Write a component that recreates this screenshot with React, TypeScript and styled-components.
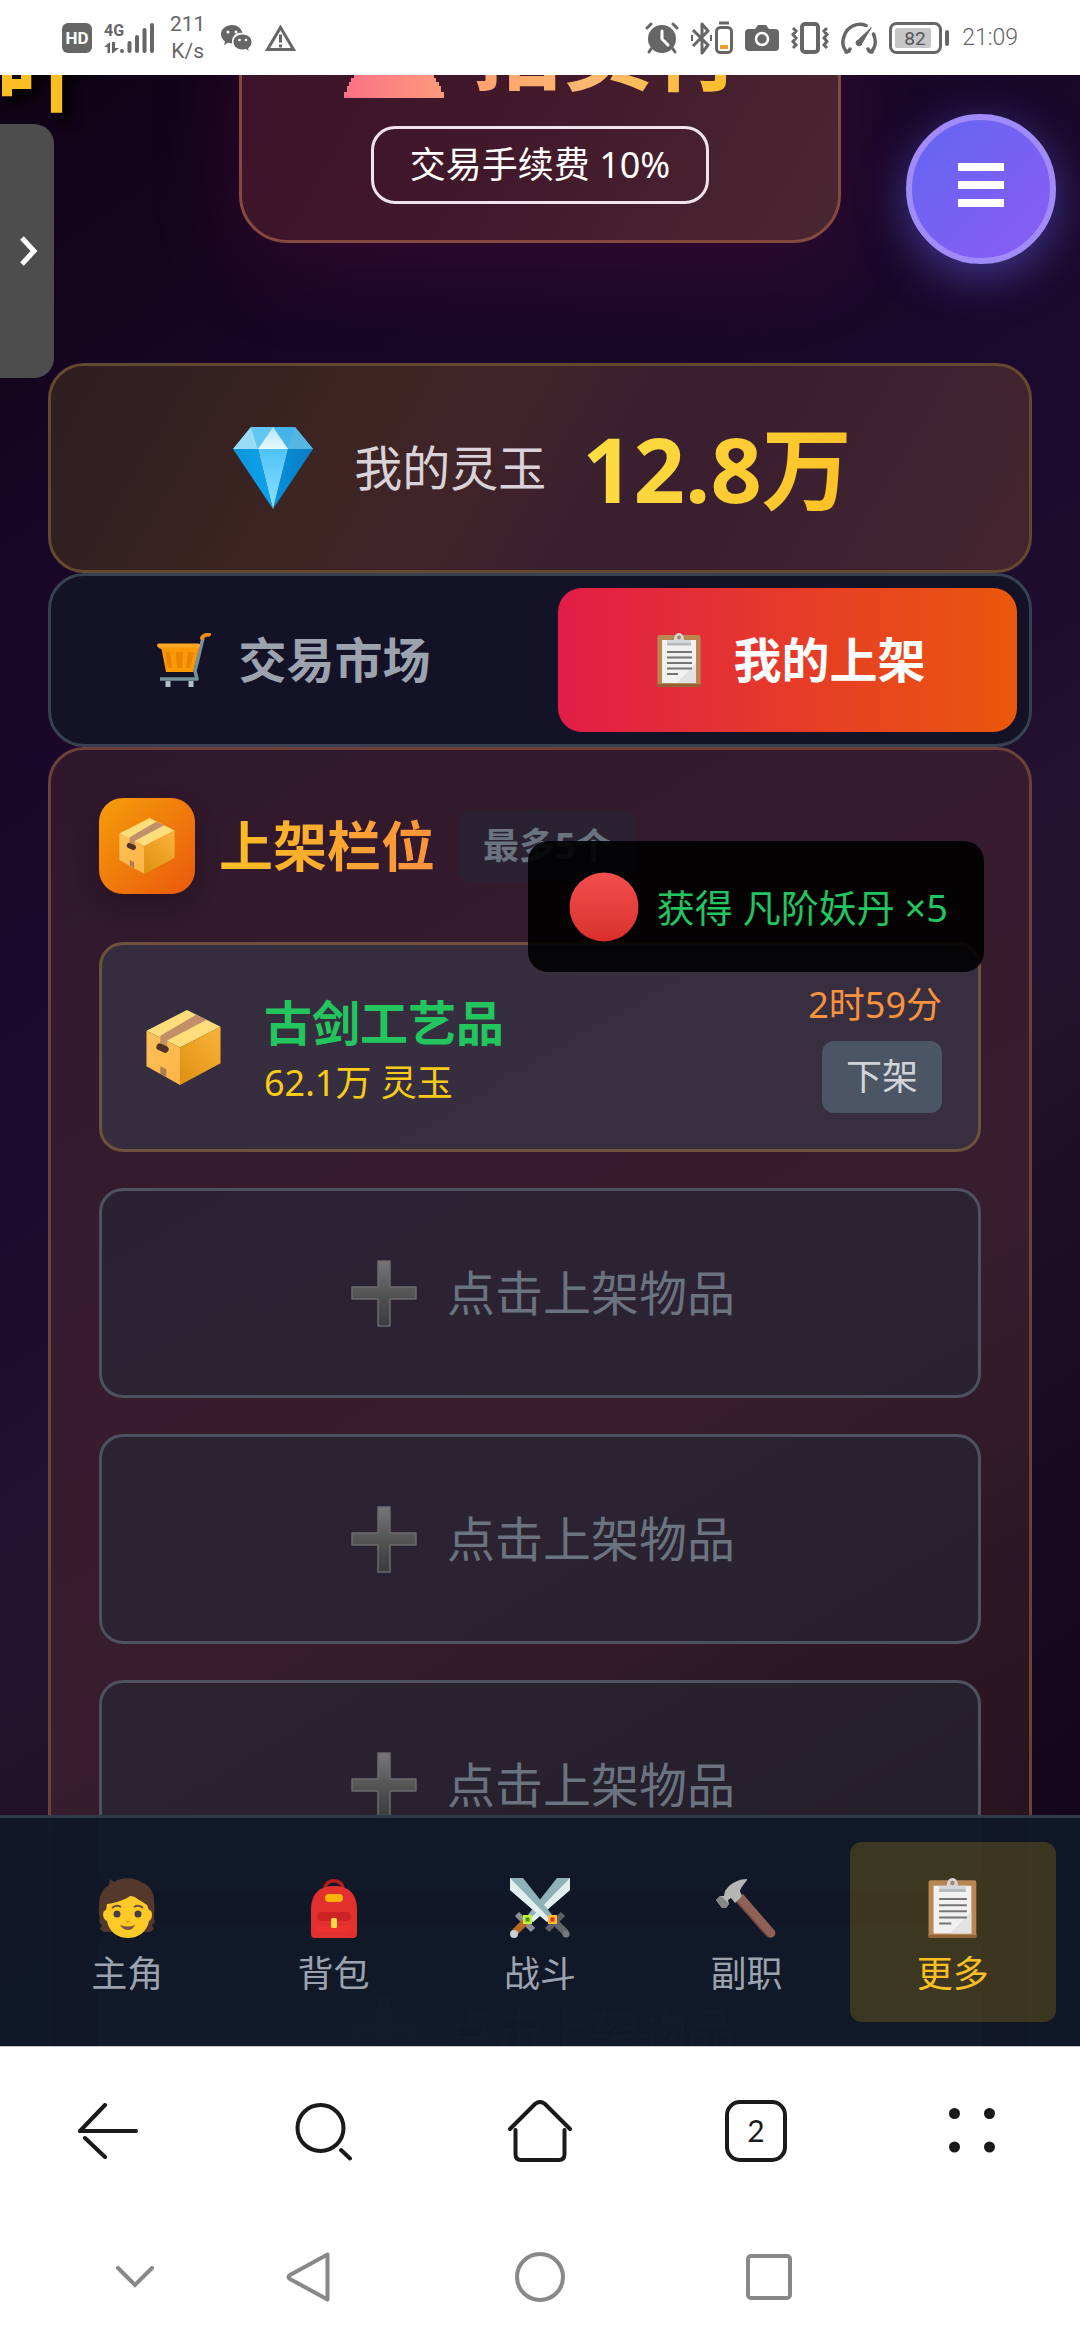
import React from "react";
import styled, { createGlobalStyle, css } from "styled-components";

const sans = `"Noto Sans", "Noto Sans CJK SC", sans-serif`;

const GlobalStyle = createGlobalStyle`
  *, *::before, *::after { box-sizing: border-box; }
  html, body { margin: 0; padding: 0; background: #fff; }
  body { font-family: ${sans}; overflow: hidden; }
  button { margin: 0; padding: 0; border: 0; background: none; color: inherit; font: inherit; cursor: pointer; }
  h1, h2, h3, p, ul { margin: 0; padding: 0; }
  ul { list-style: none; }
  svg { display: block; flex: none; }
`;

const Screen = styled.div`
  display: flex;
  flex-direction: column;
  height: 100vh;
  background: #fff;
`;

/* ---------- status bar ---------- */

const StatusBar = styled.header`
  display: flex;
  justify-content: space-between;
  align-items: center;
  flex: none;
  height: 75px;
  padding: 0 62px;
  background: #fff;
  color: #666;
  font-family: Roboto, sans-serif;
`;

const StatusGroup = styled.div`
  display: flex;
  align-items: center;
  gap: 12px;
`;

const NetSpeed = styled.div`
  padding: 0 4px;
  font-size: 21px;
  line-height: 27px;
  text-align: center;
`;

const Clock = styled.time`
  font-size: 23px;
  font-weight: 300;
  line-height: 30px;
`;

/* ---------- game page ---------- */

const Game = styled.main`
  position: relative;
  flex: 1;
  min-height: 0;
  overflow: hidden;
  background: linear-gradient(145deg, #100315 0%, #180727 20%, #1c0a2f 40%, #24132e 58%, #180a22 78%, #12031a 100%);
`;

const Sheet = styled.div`
  display: flex;
  flex-direction: column;
  padding: 0 48px;
`;

const CornerTitle = styled.span`
  position: absolute;
  left: -4px;
  top: -60px;
  color: #fbbf24;
  font-size: 90px;
  font-weight: 700;
  line-height: 108px;
  text-shadow: 8px 8px 12px #000;
`;

const Hero = styled.section`
  display: flex;
  flex-direction: column;
  align-items: center;
  gap: 24px;
  align-self: center;
  margin: -120px 0 120px;
  padding: 36px 96px;
  border: 3px solid #84493f;
  border-radius: 48px;
  background: linear-gradient(120deg, #3a1328 0%, #42192b 50%, #4a2832 100%);
  box-shadow: 0 24px 90px rgba(160, 20, 90, 0.2);
`;

const HeroTitle = styled.h1`
  display: flex;
  align-items: center;
  gap: 22px;
  font-size: 90px;
  font-weight: 700;
  line-height: 108px;
`;

const HeroText = styled.span`
  background: linear-gradient(90deg, #fda06f, #fdba70 45%, #fbbf24);
  background-clip: text;
  -webkit-background-clip: text;
  color: transparent;
`;

const FeePill = styled.p`
  height: 78px;
  padding: 0 36px;
  border: 3px solid #efe3ec;
  border-radius: 24px;
  color: #fff;
  font-size: 36px;
  line-height: 72px;
`;

const frame = css`
  border: 3px solid;
  border-radius: 36px;
`;

const Balance = styled.section`
  ${frame}
  display: flex;
  align-items: center;
  justify-content: center;
  gap: 36px;
  height: 210px;
  border-color: #64482f;
  background: linear-gradient(120deg, #2e1d20 0%, #3d2522 30%, #40242a 44%, #391e30 60%, #44252f 100%);
`;

const BalanceIcon = styled.span`
  display: flex;
  justify-content: center;
  width: 90px;
`;

const BalanceLabel = styled.span`
  color: #d9d2d8;
  font-size: 48px;
  line-height: 72px;
`;

const BalanceValue = styled.strong`
  background: linear-gradient(110deg, #fde047, #fbbf24);
  background-clip: text;
  -webkit-background-clip: text;
  color: transparent;
  font-size: 90px;
  font-weight: 700;
  line-height: 108px;
`;

const Tabs = styled.div`
  ${frame}
  display: grid;
  grid-template-columns: 1fr 1fr;
  gap: 36px;
  padding: 12px;
  border-color: #374151;
  background: #131227;
`;

const Tab = styled.button<{ $active?: boolean }>`
  display: flex;
  align-items: center;
  justify-content: center;
  gap: 24px;
  height: 144px;
  border-radius: 24px;
  color: ${(p) => (p.$active ? "#fff" : "#9ca3af")};
  background: ${(p) => (p.$active ? "linear-gradient(90deg, #e11d48, #ea580c)" : "none")};
  font-size: 48px;
  font-weight: 700;
  line-height: 72px;
`;

const TabIcon = styled.span`
  display: flex;
  justify-content: center;
  width: 60px;
`;

const Panel = styled.section`
  ${frame}
  padding: 48px;
  border-color: #6b4138;
  background: linear-gradient(150deg, #2f172b 0%, #361c2e 30%, #371d2d 52%, #2a1521 75%, #22101a 100%);
`;

const PanelHead = styled.div`
  display: flex;
  align-items: center;
  gap: 24px;
  margin-bottom: 48px;
`;

const PanelBadge = styled.span`
  display: grid;
  place-items: center;
  width: 96px;
  height: 96px;
  border-radius: 24px;
  background: linear-gradient(135deg, #f59e0b, #ea580c);
  box-shadow: 0 12px 24px rgba(0, 0, 0, 0.2);
`;

const PanelTitle = styled.h2`
  background: linear-gradient(90deg, #fbbf24, #fb923c);
  background-clip: text;
  -webkit-background-clip: text;
  color: transparent;
  font-size: 54px;
  font-weight: 700;
  line-height: 84px;
`;

const LimitTag = styled.span`
  padding: 0 24px;
  border-radius: 12px;
  background: rgba(31, 41, 55, 0.5);
  color: #6b7280;
  font-size: 36px;
  font-weight: 700;
  line-height: 72px;
`;

const Slots = styled.ul`
  display: flex;
  flex-direction: column;
  gap: 36px;
`;

const slot = css`
  display: flex;
  align-items: center;
  width: 100%;
  height: 210px;
  border: 3px solid;
  border-radius: 24px;
`;

const Listing = styled.div`
  ${slot}
  gap: 36px;
  padding: 0 36px;
  border-color: #6d533c;
  background: rgba(55, 65, 81, 0.5);
`;

const ListingIcon = styled.span`
  display: flex;
  justify-content: center;
  width: 90px;
`;

const ListingInfo = styled.div`
  flex: 1;
`;

const ListingName = styled.h3`
  color: #22c55e;
  font-size: 48px;
  font-weight: 700;
  line-height: 72px;
`;

const ListingPrice = styled.p`
  color: #facc15;
  font-size: 36px;
  line-height: 48px;
`;

const ListingSide = styled.div`
  display: flex;
  flex-direction: column;
  align-items: flex-end;
  gap: 12px;
`;

const TimeLeft = styled.span`
  color: #fb923c;
  font-size: 36px;
  line-height: 48px;
`;

const Withdraw = styled.button`
  padding: 0 24px;
  border-radius: 12px;
  background: #4b5563;
  color: #d1d5db;
  font-size: 36px;
  line-height: 72px;
`;

const EmptySlot = styled.button`
  ${slot}
  justify-content: center;
  gap: 24px;
  border-color: #4d5160;
  background: rgba(31, 41, 55, 0.5);
  color: #6b7280;
  font-size: 48px;
  line-height: 72px;
`;

const SlotIcon = styled.span`
  display: flex;
  justify-content: center;
  width: 78px;
`;

const SideHandle = styled.button`
  position: absolute;
  left: 0;
  top: 49px;
  display: flex;
  align-items: center;
  justify-content: flex-end;
  width: 54px;
  height: 254px;
  padding-right: 16px;
  border-radius: 0 20px 20px 0;
  background: #4d4d4d;
`;

const MenuButton = styled.button`
  position: absolute;
  top: 39px;
  right: 24px;
  display: grid;
  place-items: center;
  width: 150px;
  height: 150px;
  padding-bottom: 8px;
  border: 6px solid #a08bf8;
  border-radius: 50%;
  background: linear-gradient(135deg, #6366f1, #8b5cf6);
  box-shadow: 0 12px 45px rgba(99, 102, 241, 0.5);
`;

const Toast = styled.div`
  position: absolute;
  top: 766px;
  right: 96px;
  display: flex;
  align-items: center;
  gap: 18px;
  height: 131px;
  padding: 0 36px 0 41px;
  border-radius: 20px;
  background: rgba(0, 0, 0, 0.9);
  color: #22c55e;
  font-size: 38px;
  line-height: 54px;
`;

const GameNav = styled.nav`
  position: absolute;
  left: 0;
  right: 0;
  bottom: 0;
  display: grid;
  grid-template-columns: repeat(5, 1fr);
  padding: 24px;
  border-top: 3px solid #303947;
  background: rgba(17, 24, 39, 0.97);
`;

const NavItem = styled.button<{ $active?: boolean }>`
  display: flex;
  flex-direction: column;
  align-items: center;
  padding: 24px 0;
  border-radius: 12px;
  background: ${(p) => (p.$active ? "rgba(234, 179, 8, 0.2)" : "none")};
  color: ${(p) => (p.$active ? "#fbbf24" : "#9ca3af")};
  font-size: 36px;
  line-height: 48px;
`;

const NavIcon = styled.span`
  display: flex;
  align-items: center;
  height: 84px;
`;

/* ---------- browser and system bars ---------- */

const BrowserBar = styled.nav`
  display: grid;
  grid-template-columns: repeat(5, 1fr);
  flex: none;
  height: 168px;
  border-top: 1px solid #c4c6cc;
`;

const SystemBar = styled.nav`
  display: grid;
  grid-template-columns: 174fr 172fr 292fr 166fr 180fr;
  flex: none;
  height: 126px;
  padding: 0 48px;
`;

const BarButton = styled.button`
  display: grid;
  place-items: center;
`;

const TabCount = styled.span`
  width: 62px;
  height: 62px;
  border: 4px solid #1a1a1a;
  border-radius: 15px;
  color: #1a1a1a;
  font-family: Lato, sans-serif;
  font-size: 30px;
  font-weight: 400;
  line-height: 52px;
  text-align: center;
`;

/* ---------- drawings ---------- */

const Signal = () => (
  <svg width="50" height="32" viewBox="0 0 50 32" fill="#666">
    <text x="0" y="14" fontSize="16" fontWeight="700" fontFamily="Roboto, sans-serif">4G</text>
    <path d="M0 25l6-5v11H3.500v-6zM8 20h3v6h4l-6 5H8z" />
    <rect x="16" y="27" width="4" height="4" rx="2" />
    <rect x="23.500" y="19" width="4" height="12" rx="2" />
    <rect x="31" y="13" width="4" height="18" rx="2" />
    <rect x="38.500" y="6" width="4" height="25" rx="2" />
    <rect x="46" y="1" width="4" height="30" rx="2" />
  </svg>
);

const HdBadge = () => (
  <svg width="30" height="30" viewBox="0 0 30 30">
    <rect width="30" height="30" rx="6" fill="#666" />
    <text x="15" y="21" fontSize="17" fontWeight="700" fontFamily="Roboto, sans-serif" fill="#fff" textAnchor="middle">HD</text>
  </svg>
);

const Wechat = () => (
  <svg width="32" height="28" viewBox="0 0 32 28" fill="#666">
    <path d="M11 1C4.900 1 0 5 0 10.200c0 3 1.600 5.500 4 7.200L3 21l4.200-2.200c1.500.4 2.900.5 4 .5A8.500 8.500 0 0 1 21.400 9C20.500 4.400 16.200 1 11 1z" />
    <path d="M21.500 10C16.300 10 12 13.500 12 18s4.300 8 9.500 8c1.200 0 2.300-.2 3.300-.5L28.500 27.500l-.9-3.200c2-1.500 3.400-3.700 3.400-6.300 0-4.500-4.300-8-9.500-8z" stroke="#fff" strokeWidth="1" />
    <g fill="#fff">
      <circle cx="7" cy="8" r="1.500" /><circle cx="15" cy="8" r="1.500" />
      <circle cx="18.500" cy="16" r="1.300" /><circle cx="25" cy="16" r="1.300" />
    </g>
  </svg>
);

const Warning = () => (
  <svg width="31" height="28" viewBox="0 0 31 28" fill="none" stroke="#666" strokeWidth="3">
    <path d="M15.500 3.500L28.500 25.500H2.500z" />
    <path d="M15.500 10.500v8M15.500 20.500v3" />
  </svg>
);

const Alarm = () => (
  <svg width="34" height="32" viewBox="0 0 34 32" fill="none" stroke="#666" strokeWidth="3" strokeLinecap="round">
    <circle cx="17" cy="17" r="14" fill="#666" stroke="none" />
    <path d="M2 6l4-4M32 6l-4-4M6 27l-2 3M28 27l2 3" />
    <path d="M17 9v8l6 6" stroke="#fff" />
  </svg>
);

const Bluetooth = () => (
  <svg width="42" height="34" viewBox="0 0 42 34" fill="none" stroke="#666" strokeWidth="3">
    <path d="M2 9l15 15-6 8V3l6 7L2 25" strokeLinejoin="round" />
    <path d="M1 14v6M20 14v6" strokeWidth="2" />
    <rect x="25.500" y="6.500" width="15" height="25" rx="4" />
    <path d="M28 2h10" />
    <path d="M29 26h8" stroke="#f39a2d" strokeWidth="4" />
  </svg>
);

const Camera = () => (
  <svg width="34" height="26" viewBox="0 0 34 26">
    <path d="M4 4h6l3-4h8l3 4h6a4 4 0 0 1 4 4v14a4 4 0 0 1-4 4H4a4 4 0 0 1-4-4V8a4 4 0 0 1 4-4z" fill="#666" />
    <circle cx="17" cy="14" r="6" fill="none" stroke="#fff" strokeWidth="2.500" />
  </svg>
);

const Vibrate = () => (
  <svg width="38" height="32" viewBox="0 0 38 32" fill="none" stroke="#666" strokeWidth="3">
    <rect x="11" y="2" width="16" height="28" rx="3" strokeWidth="4" />
    <path d="M2 6l3 3-3 3.500 3 3.500-3 3.500 3 3.500-3 3M36 6l-3 3 3 3.500-3 3.500 3 3.500-3 3.500 3 3" />
  </svg>
);

const Gauge = () => (
  <svg width="36" height="32" viewBox="0 0 36 32" fill="none" stroke="#666" strokeWidth="3.500" strokeLinecap="round">
    <path d="M6 30C2 26 1 20 3 14.500 6 4 17 0 25 3.500M32.500 12c3 7 2 14-3 18M5 30l3-1 1-2M31 30l-3-1-1-2" />
    <path d="M30 6L21 21a3 3 0 1 1-4-3z" fill="#666" strokeWidth="1" />
  </svg>
);

const Battery = () => (
  <svg width="61" height="32" viewBox="0 0 61 32">
    <rect x="1.500" y="1.500" width="50" height="29" rx="6" fill="none" stroke="#666" strokeWidth="3" />
    <rect x="6" y="6" width="36" height="20" rx="2" fill="#c6c6c6" />
    <rect x="56" y="8" width="4" height="16" rx="2" fill="#666" />
    <text x="26" y="23" fontSize="19" fontFamily="Roboto, sans-serif" fill="#555" textAnchor="middle">82</text>
  </svg>
);

const Hall = () => (
  <svg width="112" height="108" viewBox="0 0 112 108">
    <defs>
      <linearGradient id="hall" x1="0" x2="1">
        <stop offset="0" stopColor="#fb7185" /><stop offset="1" stopColor="#fc9a7c" />
      </linearGradient>
    </defs>
    <path
      fill="url(#hall)"
      d="M56 2L100 24V34H12V24zM20 36H36V70H20zM48 36H64V70H48zM76 36H92V70H76zM18 72H94V80H96V84H98V88H101V92H103V98H106V104H6V98H9V92H11V88H13V84H16V80H18z"
    />
  </svg>
);

const Gem = () => (
  <svg width="80" height="82" viewBox="0 0 80 82">
    <defs>
      <linearGradient id="gemMid" x1="0" x2="0" y1="0" y2="1"><stop offset="0" stopColor="#4fc3f7" /><stop offset="1" stopColor="#8be0ff" /></linearGradient>
      <linearGradient id="gemTop" x1="0" x2="0" y1="0" y2="1"><stop offset="0" stopColor="#b3e5fc" /><stop offset="1" stopColor="#e9f9ff" /></linearGradient>
      <linearGradient id="gemL" x1="0" x2="1"><stop offset="0" stopColor="#0c93da" /><stop offset="1" stopColor="#0aa5ee" /></linearGradient>
      <linearGradient id="gemR" x1="0" x2="1"><stop offset="0" stopColor="#0390e0" /><stop offset="1" stopColor="#0b7dc0" /></linearGradient>
    </defs>
    <path d="M18 0H62L80 22H0z" fill="#4db9ec" />
    <path d="M18 0L0 22H25z" fill="#9adbf8" /><path d="M18 0H40L25 22z" fill="#62c6f2" />
    <path d="M62 0H40L55 22z" fill="#45b4ea" /><path d="M62 0L80 22H55z" fill="#55b6e2" />
    <path d="M40 0L55 22H25z" fill="url(#gemTop)" />
    <path d="M0 22H25L40 82z" fill="url(#gemL)" />
    <path d="M80 22H55L40 82z" fill="url(#gemR)" />
    <path d="M25 22H55L40 82z" fill="url(#gemMid)" />
  </svg>
);

const Cart = () => (
  <svg width="54" height="54" viewBox="0 0 54 54" fill="none">
    <path d="M46 5L38 38L40 46H3" stroke="#78909c" strokeWidth="3.500" strokeLinejoin="round" />
    <path d="M45 5Q46 2 52 1.500" stroke="#ef8b0f" strokeWidth="4" strokeLinecap="round" />
    <path d="M2 11H43L36 39H9L4.500 16A3 3 0 0 1 2 11z" fill="#fb9905" />
    <path d="M2 12.500H41" stroke="#ffa726" strokeWidth="4" strokeLinecap="round" />
    <path d="M8 19h5l2 16h-4zM19 19h7l-1 16h-5zM31 19h6l-4 16h-4z" fill="#e98300" />
    <path d="M11 48v6M34 48v6" stroke="#b0bec5" strokeWidth="5" />
  </svg>
);

const Clipboard = ({ height }: { height: number }) => (
  <svg width={(height * 44) / 54} height={height} viewBox="0 0 44 54">
    <rect x="0.500" y="2" width="43" height="52" rx="2" fill="#b88752" />
    <path d="M0 51h44v1.500a2 2 0 0 1-2 1.500H2a2 2 0 0 1-2-1.500z" fill="#936338" />
    <path d="M5 7H39V50H5z" fill="#f1f1f1" />
    <path d="M39 30V50H20z" fill="#e2e2e2" />
    <path d="M10 7h7c0-4 2-7 5-7s5 3 5 7h7v5H10z" fill="#d5d8da" />
    <path d="M10 10h24v2.500H10z" fill="#b4b8bb" />
    <circle cx="22" cy="4.500" r="2" fill="#a8866a" />
    <path d="M10 19H35M10 24.500H35M10 30H35M10 35.500H35M10 41H21" stroke="#757575" strokeWidth="1.800" />
  </svg>
);

const Parcel = ({ size }: { size: number }) => (
  <svg width={size} height={size} viewBox="0 0 75 76">
    <defs>
      <linearGradient id="boxL" x1="0" x2="0.600" y1="0" y2="1"><stop offset="0" stopColor="#fcc258" /><stop offset="1" stopColor="#ffb54a" /></linearGradient>
      <linearGradient id="boxR" x1="1" x2="0.200" y1="0" y2="1"><stop offset="0" stopColor="#fcb33c" /><stop offset="1" stopColor="#de9412" /></linearGradient>
    </defs>
    <path d="M41 0L75 17L34 38L0 21z" fill="#ffdd7b" />
    <path d="M0 21L34 38V76L0 57z" fill="url(#boxL)" />
    <path d="M34 38L75 17V54L34 76z" fill="url(#boxR)" />
    <path d="M50 5L61 10L21 31V37L14 34V26z" fill="#c19069" />
    <rect x="10" y="35" width="13" height="7" rx="3.500" fill="#4e3324" transform="rotate(25 16 38)" />
    <path d="M14 57l6 3v8l-6-3.500z" fill="#a98150" />
  </svg>
);

const Plus = () => (
  <svg width="66" height="67" viewBox="0 0 66 67">
    <defs>
      <linearGradient id="plus" x1="0" x2="0" y1="0" y2="1"><stop offset="0" stopColor="#777578" /><stop offset="0.600" stopColor="#4e4e4e" /><stop offset="1" stopColor="#3c3c3c" /></linearGradient>
    </defs>
    <path d="M27 1H39V27H65V39H39V66H27V39H1V27H27z" fill="url(#plus)" stroke="#6b696d" strokeWidth="1.500" strokeLinejoin="round" />
  </svg>
);

const RedBall = () => (
  <svg width="70" height="70" viewBox="0 0 70 70">
    <defs>
      <linearGradient id="ball" x1="0" x2="0" y1="0" y2="1"><stop offset="0" stopColor="#f44f4d" /><stop offset="0.850" stopColor="#dc3633" /><stop offset="1" stopColor="#dd2a2a" /></linearGradient>
    </defs>
    <circle cx="35" cy="35" r="34.500" fill="url(#ball)" />
  </svg>
);

const Person = () => (
  <svg width="58" height="60" viewBox="0 0 58 60">
    <path d="M11 7l1-6 4 3C24-1 36-1 43 4c9 3 14 11 13 22 1 5 0 9 0 14l1 4-3 3 2 4-4 3H6l-4-3 2-4-3-3 1-4C0 35 1 31 1 27 1 18 4 11 11 7z" fill="#54382c" />
    <path d="M9 26c10-1 19-5 23-8 5 0 7 3 11 5l6 4 2 5c4 0 4 9 0 11-2 11-11 17-21 17S11 54 9 43c-5-2-5-11-1-11z" fill="#ffca28" />
    <path d="M14 30q4-4 9-1M36 29q5-3 9 1" fill="none" stroke="#6d4c41" strokeWidth="2" />
    <circle cx="19" cy="36" r="3.500" fill="#404040" /><circle cx="40" cy="36" r="3.500" fill="#404040" />
    <path d="M27 42q3 2 6 0l-3 3z" fill="#e59600" />
    <path d="M22 47q8 3 15 0-2 5-7 5t-8-5z" fill="#795548" />
  </svg>
);

const Backpack = () => (
  <svg width="48" height="60" viewBox="0 0 48 60">
    <path d="M15 11C15 0 33 0 33 11" fill="none" stroke="#b71c1c" strokeWidth="3.500" />
    <path d="M1 32C1 15 10 8 24 8s23 7 23 24V56a4 4 0 0 1-4 4H5a4 4 0 0 1-4-4z" fill="#e2302f" />
    <rect x="15" y="16" width="18" height="8" rx="4" fill="#fbb305" />
    <rect x="7" y="34" width="34" height="9" rx="4.500" fill="#ce2325" /><rect x="7" y="48" width="34" height="6" rx="3" fill="#f02f2f" />
    <rect x="21" y="40" width="6" height="10" rx="1.500" fill="#ffd740" />
  </svg>
);

const Swords = () => (
  <svg width="60" height="60" viewBox="0 0 60 60">
    <path d="M47 0H60V12L23 44L17 38z" fill="#8fb1b8" />
    <path d="M60 0V12L23 44L20 41z" fill="#e0eef0" />
    <path d="M13 0H0V12L37 44L43 38z" fill="#8fb1b8" />
    <path d="M0 0V12L37 44L40 41z" fill="#e0eef0" />
    <path d="M7 36l16 16" stroke="#8c8f97" strokeWidth="6" />
    <path d="M53 36L37 52" stroke="#5d6066" strokeWidth="6" />
    <path d="M15 44L4 55" stroke="#b96a22" strokeWidth="7" />
    <path d="M45 44L56 55" stroke="#62656a" strokeWidth="7" />
    <circle cx="4" cy="56" r="4" fill="#c9cdd2" /><circle cx="56" cy="56" r="3.500" fill="#777b80" />
    <rect x="13" y="37" width="9" height="9" fill="#c6ee3a" /><rect x="15.500" y="39.500" width="4" height="4" fill="#4c8c1f" />
    <rect x="38" y="37" width="9" height="9" fill="#ffb52e" /><rect x="40.500" y="39.500" width="4" height="4" fill="#d8320a" />
  </svg>
);

const Hammer = () => (
  <svg width="60" height="60" viewBox="0 0 60 60">
    <path d="M19 22L27 16L59 53C61 58 55 61 52 59z" fill="#8f6053" />
    <path d="M19 22L52 59" stroke="#6f463b" strokeWidth="1.500" />
    <path d="M31 1C24 1 15 4 9 13L8 18L4 18L0 22L6 30L10 30L13 26L12 22L15 20L19 25L26 18L24 13C25 9 29 5 31 2z" fill="#b5b5b5" />
    <path d="M0 22L6 30L10 30L13 26L5 18z" fill="#868686" />
  </svg>
);

const slots = [1, 2, 3, 4];

const navItems = [
  { label: "主角", icon: <Person /> },
  { label: "背包", icon: <Backpack /> },
  { label: "战斗", icon: <Swords /> },
  { label: "副职", icon: <Hammer /> },
  { label: "更多", icon: <Clipboard height={60} />, active: true },
];

export default function App() {
  return (
    <Screen>
      <GlobalStyle />
      <StatusBar>
        <StatusGroup>
          <HdBadge />
          <Signal />
          <NetSpeed>211<br />K/s</NetSpeed>
          <Wechat />
          <Warning />
        </StatusGroup>
        <StatusGroup>
          <Alarm />
          <Bluetooth />
          <Camera />
          <Vibrate />
          <Gauge />
          <Battery />
          <Clock>21:09</Clock>
        </StatusGroup>
      </StatusBar>

      <Game>
        <CornerTitle>叶</CornerTitle>
        <Sheet>
          <Hero>
            <HeroTitle>
              <Hall />
              <HeroText>拍卖行</HeroText>
            </HeroTitle>
            <FeePill>交易手续费 10%</FeePill>
          </Hero>

          <Balance>
            <BalanceIcon><Gem /></BalanceIcon>
            <BalanceLabel>我的灵玉</BalanceLabel>
            <BalanceValue>12.8万</BalanceValue>
          </Balance>

          <Tabs>
            <Tab type="button"><TabIcon><Cart /></TabIcon>交易市场</Tab>
            <Tab type="button" $active><TabIcon><Clipboard height={54} /></TabIcon>我的上架</Tab>
          </Tabs>

          <Panel>
            <PanelHead>
              <PanelBadge><Parcel size={56} /></PanelBadge>
              <PanelTitle>上架栏位</PanelTitle>
              <LimitTag>最多5个</LimitTag>
            </PanelHead>
            <Slots>
              <li>
                <Listing>
                  <ListingIcon><Parcel size={75} /></ListingIcon>
                  <ListingInfo>
                    <ListingName>古剑工艺品</ListingName>
                    <ListingPrice>62.1万 灵玉</ListingPrice>
                  </ListingInfo>
                  <ListingSide>
                    <TimeLeft>2时59分</TimeLeft>
                    <Withdraw type="button">下架</Withdraw>
                  </ListingSide>
                </Listing>
              </li>
              {slots.map((n) => (
                <li key={n}>
                  <EmptySlot type="button"><SlotIcon><Plus /></SlotIcon>点击上架物品</EmptySlot>
                </li>
              ))}
            </Slots>
          </Panel>
        </Sheet>

        <SideHandle type="button" aria-label="展开">
          <svg width="19" height="30" viewBox="0 0 19 30" fill="none" stroke="#fff" strokeWidth="5">
            <path d="M3 2L15 15L3 28" />
          </svg>
        </SideHandle>
        <MenuButton type="button" aria-label="菜单">
          <svg width="46" height="44" viewBox="0 0 46 44" fill="#fff">
            <path d="M0 0H46V8H0zM0 18H46V26H0zM0 36H46V44H0z" />
          </svg>
        </MenuButton>
        <Toast role="status"><RedBall />获得 凡阶妖丹 ×5</Toast>

        <GameNav>
          {navItems.map((item) => (
            <NavItem key={item.label} type="button" $active={item.active}>
              <NavIcon>{item.icon}</NavIcon>
              {item.label}
            </NavItem>
          ))}
        </GameNav>
      </Game>

      <BrowserBar>
        <BarButton type="button" aria-label="后退">
          <svg width="60" height="56" viewBox="0 0 60 56" fill="none" stroke="#1a1a1a" strokeWidth="4" strokeLinecap="round" strokeLinejoin="round">
            <path d="M27 2L2 28H58M7 35L27 54" />
          </svg>
        </BarButton>
        <BarButton type="button" aria-label="搜索">
          <svg width="58" height="60" viewBox="0 0 58 60" fill="none" stroke="#1a1a1a" strokeWidth="4" strokeLinecap="round">
            <circle cx="25.500" cy="27" r="23" /><path d="M46 49L55 57.500" />
          </svg>
        </BarButton>
        <BarButton type="button" aria-label="主页">
          <svg width="64" height="62" viewBox="0 0 64 62" fill="none" stroke="#1a1a1a" strokeWidth="4" strokeLinecap="round" strokeLinejoin="round">
            <path d="M2 29L27 4Q32 0 37 4L62 29M7.500 30V54Q7.500 60 13 60H51Q56.500 60 56.500 54V30" />
          </svg>
        </BarButton>
        <BarButton type="button" aria-label="标签页"><TabCount>2</TabCount></BarButton>
        <BarButton type="button" aria-label="更多选项">
          <svg width="46" height="46" viewBox="0 0 46 46" fill="#1a1a1a">
            <circle cx="5.500" cy="5.500" r="5.500" /><circle cx="40.500" cy="5.500" r="5.500" />
            <circle cx="5.500" cy="39" r="5.500" /><circle cx="40.500" cy="39" r="5.500" />
          </svg>
        </BarButton>
      </BrowserBar>
      <SystemBar>
        <BarButton type="button" aria-label="收起">
          <svg width="38" height="22" viewBox="0 0 38 22" fill="none" stroke="#888" strokeWidth="4" strokeLinecap="round">
            <path d="M2 2L19 19L36 2" />
          </svg>
        </BarButton>
        <BarButton type="button" aria-label="返回">
          <svg width="44" height="50" viewBox="0 0 44 50" fill="none" stroke="#888" strokeWidth="4" strokeLinejoin="round">
            <path d="M41.500 2.500V47.500L4 27Q1 25 4 23z" />
          </svg>
        </BarButton>
        <BarButton type="button" aria-label="桌面">
          <svg width="50" height="50" viewBox="0 0 50 50" fill="none" stroke="#888" strokeWidth="4">
            <circle cx="25" cy="25" r="23" />
          </svg>
        </BarButton>
        <BarButton type="button" aria-label="最近任务">
          <svg width="46" height="46" viewBox="0 0 46 46" fill="none" stroke="#888" strokeWidth="4">
            <rect x="2" y="2" width="42" height="42" rx="3" />
          </svg>
        </BarButton>
      </SystemBar>
    </Screen>
  );
}
